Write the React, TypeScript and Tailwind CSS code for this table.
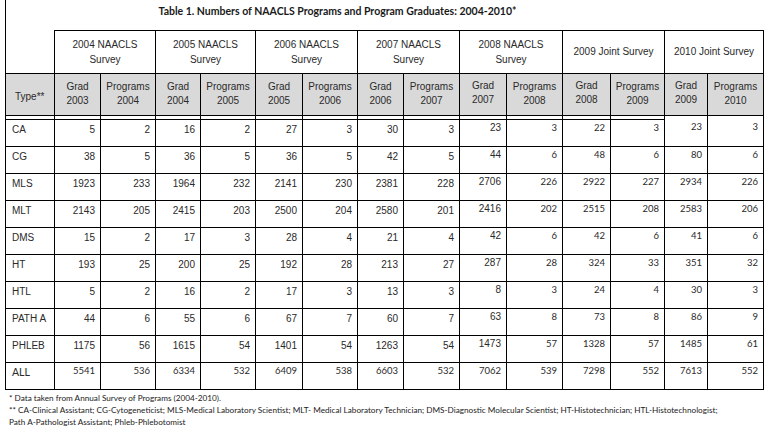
const surveys = [
  { label: ['2004 NAACLS', 'Survey'], grad: '2003', prog: '2004' },
  { label: ['2005 NAACLS', 'Survey'], grad: '2004', prog: '2005' },
  { label: ['2006 NAACLS', 'Survey'], grad: '2005', prog: '2006' },
  { label: ['2007 NAACLS', 'Survey'], grad: '2006', prog: '2007' },
  { label: ['2008 NAACLS', 'Survey'], grad: '2007', prog: '2008' },
  { label: ['2009 Joint Survey'], grad: '2008', prog: '2009' },
  { label: ['2010 Joint Survey'], grad: '2009', prog: '2010' },
];

const rows: [string, ...number[]][] = [
  ['CA', 5, 2, 16, 2, 27, 3, 30, 3, 23, 3, 22, 3, 23, 3],
  ['CG', 38, 5, 36, 5, 36, 5, 42, 5, 44, 6, 48, 6, 80, 6],
  ['MLS', 1923, 233, 1964, 232, 2141, 230, 2381, 228, 2706, 226, 2922, 227, 2934, 226],
  ['MLT', 2143, 205, 2415, 203, 2500, 204, 2580, 201, 2416, 202, 2515, 208, 2583, 206],
  ['DMS', 15, 2, 17, 3, 28, 4, 21, 4, 42, 6, 42, 6, 41, 6],
  ['HT', 193, 25, 200, 25, 192, 28, 213, 27, 287, 28, 324, 33, 351, 32],
  ['HTL', 5, 2, 16, 2, 17, 3, 13, 3, 8, 3, 24, 4, 30, 3],
  ['PATH A', 44, 6, 55, 6, 67, 7, 60, 7, 63, 8, 73, 8, 86, 9],
  ['PHLEB', 1175, 56, 1615, 54, 1401, 54, 1263, 54, 1473, 57, 1328, 57, 1485, 61],
  ['ALL', 5541, 536, 6334, 532, 6409, 538, 6603, 532, 7062, 539, 7298, 552, 7613, 552],
];

const widths = [49, 46, 55, 45, 55, 47, 55, 46, 56, 47, 56, 48, 54, 43, 56];

const arial = "font-['Liberation_Sans',Arial,sans-serif]";
const calibri = "font-['Lato','Open_Sans',sans-serif]";

export default function App() {
  return (
    <div className="w-[780px] h-[433px] bg-white overflow-hidden text-[#2a2a2a]">
      <table className="ml-[5px] w-[758px] table-fixed border-collapse">
        <colgroup>
          {widths.map((w, i) => (
            <col key={i} style={{ width: w }} />
          ))}
        </colgroup>
        <tbody>
          {/* title row */}
          <tr className="h-[30px]">
            <td className="border-l border-black p-0" />
            <td colSpan={14} className="p-0 pl-[104px] align-top pt-0 leading-[18px]">
              <span className={`${calibri} text-[10.5px] font-bold text-[#1a1a1a] whitespace-nowrap`}>
                Table 1. Numbers of NAACLS Programs and Program Graduates: 2004-2010*
              </span>
            </td>
          </tr>

          {/* survey headers */}
          <tr className="h-[43px]">
            <td className="border-l border-black p-0" />
            {surveys.map((s) => (
              <td
                key={s.grad}
                colSpan={2}
                className={`${arial} border border-black p-0 text-center align-middle text-[10px] leading-[15px]`}
              >
                {s.label.map((l) => (
                  <div key={l}>{l}</div>
                ))}
              </td>
            ))}
          </tr>

          {/* grad/program headers */}
          <tr className="h-[42px] bg-[#d9d9d9]">
            <td className={`${arial} border border-black p-0 pl-[9px] pb-[11px] align-bottom text-[10px]`}>Type**</td>
            {surveys.map((s, i) => (
              <>
                <td
                  key={s.grad + 'g'}
                  className={`${arial} border border-black p-0 text-center text-[10px] leading-[14px] ${
                    i >= 4 ? 'align-top pt-[5px]' : 'align-middle'
                  }`}
                >
                  <div>Grad</div>
                  <div>{s.grad}</div>
                </td>
                <td
                  key={s.prog + 'p'}
                  className={`${arial} border border-black p-0 text-center align-middle text-[10px] leading-[14px]`}
                >
                  <div>Programs</div>
                  <div>{s.prog}</div>
                </td>
              </>
            ))}
          </tr>

          {/* spacer */}
          <tr className="h-[4px]">
            {widths.map((_, i) => (
              <td key={i} className="border-x border-black p-0" />
            ))}
          </tr>

          {rows.map(([type, ...vals], r) => {
            const isAll = type === 'ALL';
            return (
              <tr key={type} className="h-[27px]">
                <td
                  className={`${isAll ? calibri + ' text-[10.5px] pt-[2px]' : arial + ' text-[10px] pt-[3px]'} border border-black p-0 pl-[6px] align-top leading-[14px]`}
                >
                  {type}
                </td>
                {vals.map((v, i) => {
                  const cal = isAll || i >= 9;
                  const noTop = r === 0 && i >= 12;
                  return (
                    <td
                      key={i}
                      className={`${cal ? calibri + ' text-[9.5px] pt-[1px]' : arial + ' text-[10px]'} border border-black p-0 pr-[5px] text-right align-top leading-[14px] ${
                        cal ? '' : i === 8 ? 'pt-[1px]' : 'pt-[3px]'
                      } ${noTop ? 'border-t-0' : ''}`}
                    >
                      {v}
                    </td>
                  );
                })}
              </tr>
            );
          })}
        </tbody>
      </table>

      <div className={`${calibri} pl-[9px] pt-[2px] text-[8.2px] leading-[12px] text-[#222]`}>
        <div>* Data taken from Annual Survey of Programs (2004-2010).</div>
        <div className="whitespace-nowrap">
          ** CA-Clinical Assistant; CG-Cytogeneticist; MLS-Medical Laboratory Scientist; MLT- Medical Laboratory Technician; DMS-Diagnostic Molecular Scientist; HT-Histotechnician; HTL-Histotechnologist;
        </div>
        <div>Path A-Pathologist Assistant; Phleb-Phlebotomist</div>
      </div>
    </div>
  );
}
